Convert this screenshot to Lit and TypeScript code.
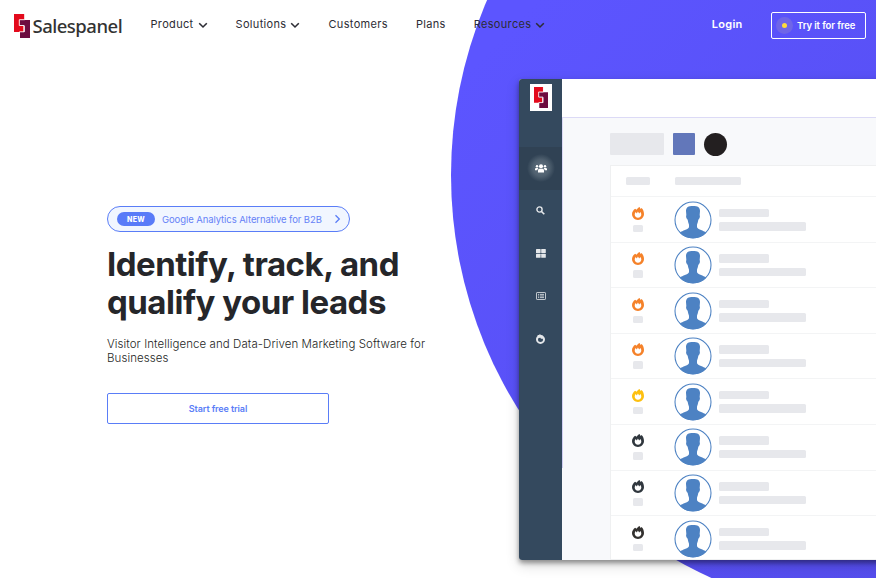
import { LitElement, html, css, svg } from "lit";
import { customElement } from "lit/decorators.js";
import { styleMap } from "lit/directives/style-map.js";

const chevron = html`<svg width="10" height="7" viewBox="0 0 10 7" fill="none"><path d="M1.2 1.3 5 5l3.8-3.7" stroke="#2c2c34" stroke-width="1.6"/></svg>`;

const mark = svg`
  <path d="M0 0H10.5V6H6V12H9.5V18H0Z" fill="#e30a1c"/>
  <path d="M5.8 6H16V24H6V18H10.5V12H5.8Z" fill="#6d0b40"/>
  <path d="M10.8 0V5.7H5.3V11.5H10.2V17.8H5.5V18.6" fill="none" stroke="#fff" stroke-width=".9"/>`;

const flame = html`<svg class="flame" width="12" height="13" viewBox="0 0 12 13">
  <path fill="currentColor" fill-rule="evenodd" d="M3.1 1.7 4.6 2.8C5.2 1.6 6.2.6 7.6 0c.2.9.6 1.4 1.1 1.9l.9-.8C11.3 2.8 12 5 12 7.1 12 10.5 9.300 13 6 13S0 10.500 0 7.100C0 5 1.300 3 3.100 1.700ZM3.700 5.100C3 5.900 2.700 6.600 2.700 7.500c0 1.900 1.400 3.200 3.300 3.200s3.300-1.300 3.300-3.200c0-.9-.3-1.700-.9-2.400L7.200 6.600 5.900 4.600 4.800 6.400Z"/></svg>`;

const avatar = html`<svg class="avatar" width="38" height="38" viewBox="0 0 114 114">
  <circle cx="57" cy="57" r="54" fill="#fff" stroke="#4d82c3" stroke-width="3.2"/>
  <path fill="#4d82c3" d="M36 30C36 19 43 15 57 15S78 19 78 30L77 42C79 47 77 53 73 56 72 63 70 67 69 71V79C74 87 87 88 97 95 87 106 73 112 57 112S27 106 17 95C27 88 40 87 45 79V71C44 67 42 63 41 56 37 53 35 47 37 42Z"/></svg>`;

@customElement("app-header")
class AppHeader extends LitElement {
  static styles = css`
    :host { display: flex; height: 50px; position: relative; color: #2c2c34; font: 400 11px Inter, sans-serif; letter-spacing: .33px; }
    .brand { display: flex; width: 136.5px; padding: 14px 0 0 14px; }
    .mark { flex: none; }
    .name { font: 500 18.5px/24px "Noto Sans", sans-serif; letter-spacing: -.5px; margin: 0 0 0 2.5px; color: #333; }
    nav { display: flex; height: 48px; align-items: center; gap: 28px; }
    .item { display: flex; align-items: center; gap: 4px; white-space: nowrap; }
    .item svg { margin-top: 2px; }
    .actions { display: flex; margin-left: auto; padding: 12px 10px 0 0; align-items: flex-start; color: #fff; }
    .login { font-weight: 600; line-height: 25px; margin-right: 28.5px; letter-spacing: .25px; }
    .try { display: flex; align-items: center; box-sizing: border-box; width: 95px; height: 27px; border: 1px solid #fff; border-radius: 2px; padding-left: 4px; gap: 4px; font: 600 9.5px Inter, sans-serif; letter-spacing: -.1px; white-space: nowrap; }
    .halo { display: grid; place-items: center; width: 17px; height: 17px; border-radius: 50%; background: #6f65e8; }
    .halo::after { content: ""; width: 5px; height: 5px; border-radius: 50%; background: #ffda3b; }
  `;
  render() {
    return html`
      <div class="brand"><svg class="mark" width="16" height="24" viewBox="0 0 16 24">${mark}</svg><span class="name">Salespanel</span></div>
      <nav>
        ${[["Product", true], ["Solutions", true], ["Customers", false], ["Plans", false], ["Resources", true]].map(
          ([label, menu]) => html`<span class="item">${label}${menu ? chevron : ""}</span>`)}
      </nav>
      <div class="actions"><span class="login">Login</span><span class="try"><i class="halo"></i>Try it for free</span></div>`;
  }
}

@customElement("app-hero")
class AppHero extends LitElement {
  static styles = css`
    :host { display: block; width: 340px; padding: 156px 0 0 107px; font-family: Inter, sans-serif; color: #25262a; }
    .pill { display: flex; align-items: center; box-sizing: border-box; width: 243px; height: 26px; border: 1px solid #5a7df7; border-radius: 13px; background: #f1f6ff; padding: 0 8px 0 9px; color: #6682f7; font-size: 9.5px; letter-spacing: -.09px; white-space: nowrap; }
    .tag { width: 38px; height: 14px; border-radius: 7px; background: #597bf8; color: #fff; font: 800 7px/15px Inter, sans-serif; text-align: center; letter-spacing: .4px; margin-right: 7px; }
    .pill svg { margin-left: auto; }
    h1 { margin: 13px 0 0; font-size: 33px; line-height: 38px; font-weight: 700; letter-spacing: -.5px; white-space: nowrap; }
    p { margin: 16px 0 0; font-size: 11.5px; line-height: 14px; font-weight: 300; letter-spacing: .07px; white-space: nowrap; color: #1e1f25; }
    .cta { box-sizing: border-box; width: 222px; height: 31px; margin-top: 28px; border: 1px solid #5a7df7; border-radius: 2px; color: #5a7df7; text-align: center; font: 600 9px/29px Inter, sans-serif; letter-spacing: -.1px; }
  `;
  render() {
    return html`
      <div class="pill"><span class="tag">NEW</span><span>Google Analytics Alternative for B2B</span>
        <svg width="7" height="10" viewBox="0 0 7 10" fill="none"><path d="m1.5 1.3 3.8 3.7-3.8 3.7" stroke="#5a7df7" stroke-width="1.3"/></svg></div>
      <h1>Identify, track, and<br>qualify your leads</h1>
      <p>Visitor Intelligence and Data-Driven Marketing Software for<br>Businesses</p>
      <div class="cta">Start free trial</div>`;
  }
}

@customElement("app-dashboard")
class AppDashboard extends LitElement {
  static styles = css`
    :host { display: flex; width: 380px; height: 481px; border-radius: 3px; overflow: hidden; background: #f8f9fb; }
    .side { width: 43px; background: #34495e; flex: none; display: flex; flex-direction: column; }
    .logo { box-sizing: border-box; width: 22px; height: 27px; margin: 4.5px 0 36.5px 11px; background: #fff; padding: 3px 4px; }
    .logo svg { display: block; }
    .slot { height: 42.6px; display: grid; place-items: center; color: #e4e7ea; }
    .slot.on { background: #304254; }
    .glow { display: grid; place-items: center; width: 28px; height: 28px; border-radius: 50%; background: radial-gradient(closest-side, #657482 0, #4f606f 60%, #304254 100%); color: #fff; }
    .main { flex: 1; min-width: 0; display: flex; flex-direction: column; }
    .top { flex: none; height: 38px; background: #fff; border-bottom: 1px solid #dcdaf6; }
    .body { flex: 1; padding: 14.5px 0 0 48px; background: linear-gradient(#dcdaf6, #cfcdf2) 0 0 / 1px 350px no-repeat; }
    .tools { display: flex; align-items: center; gap: 9px; height: 23px; }
    .field { width: 53.5px; height: 22.5px; background: #e7e8ec; border-radius: 1px; }
    .square { width: 22.5px; height: 22.5px; background: #6277ba; border-radius: 1px; }
    .dot { width: 23px; height: 23px; background: #231f20; border-radius: 50%; }
    .table { margin-top: 9.5px; border: 1px solid #eff0f1; background: #fff; height: 393px; overflow: hidden; }
    .head { display: flex; height: 31px; box-sizing: border-box; padding: 11px 0 0 15px; gap: 25px; border-bottom: 1px solid #f3f4f5; }
    .bar { background: #e7e8ec; border-radius: 1.5px; }
    .row { display: flex; height: 45.6px; box-sizing: border-box; border-bottom: 1px solid #f3f4f5; }
    .score { width: 54px; padding-top: 9.5px; flex: none; display: flex; flex-direction: column; align-items: center; gap: 5px; }
    .flame, .avatar { display: block; flex: none; }
    .avatar { margin: 3.5px 7px 0 9px; }
    .lines { padding-top: 11.5px; display: grid; gap: 5px; align-content: start; }
  `;
  bar(w: number, h: number) {
    return html`<div class="bar" style=${styleMap({ width: `${w}px`, height: `${h}px` })}></div>`;
  }
  render() {
    const glyphs = [
      html`<svg width="9" height="9" viewBox="0 0 9 9"><circle cx="3.5" cy="3.5" r="2.6" fill="none" stroke="currentColor" stroke-width="1.4"/><path d="m5.5 5.5 2.8 2.8" stroke="currentColor" stroke-width="1.6"/></svg>`,
      html`<svg width="10" height="9" viewBox="0 0 10 9" fill="currentColor"><rect width="4.6" height="4.1" rx=".6"/><rect x="5.2" width="4.6" height="4.1" rx=".6"/><rect y="4.7" width="4.6" height="4.1" rx=".6"/><rect x="5.2" y="4.7" width="4.6" height="4.1" rx=".6"/></svg>`,
      html`<svg width="10" height="8" viewBox="0 0 10 8" fill="none" stroke="currentColor"><rect x=".5" y=".5" width="9" height="7" rx=".6" stroke-width=".8"/><path d="M2 2.4h1m.8 0H8M2 4h1m.8 0H8M2 5.6h1m.8 0H8" stroke-width=".8"/></svg>`,
      html`<svg width="9" height="10" viewBox="0 0 12 13"><path fill="currentColor" fill-rule="evenodd" d="M2 2.6 2.2 1.3 3.800 1.300 5.200 0 6.800 1.300 8.600 1.600 10 2.900C11.300 4 12 5.500 12 7.200 12 10.500 9.300 13 6 13S0 10.500 0 7.200C0 5.500.8 3.600 2 2.600ZM3.500 5.300C2.900 6 2.700 6.700 2.700 7.500c0 1.900 1.400 3 3.300 3s3.300-1.100 3.300-3c0-.5-.1-.9-.3-1.300L6.500 6.200 6 4.700Z"/></svg>`,
    ];
    const heat = ["#f5822a", "#f5822a", "#f5822a", "#f5822a", "#fdc010", "#30373e", "#30373e", "#33312f"];
    return html`
      <div class="side">
        <div class="logo"><svg width="14" height="21" viewBox="0 0 16 24">${mark}</svg></div>
        <div class="slot on"><div class="glow"><svg width="12" height="9" viewBox="0 0 12 9" fill="currentColor"><circle cx="6" cy="2.3" r="2"/><circle cx="2" cy="2.2" r="1.2"/><circle cx="10" cy="2.2" r="1.2"/><path d="M3 8.500V6.500Q3 4.800 4.500 4.800h3Q9 4.800 9 6.500v2ZM0 6.300V5Q0 3.900 1.200 3.900H3Q3.400 4.200 3 4.700 2.300 5.500 2.200 6.300ZM12 6.300V5q0-1.100-1.200-1.100H9q-.4.300 0 .8.700.8.800 1.600Z"/></svg></div></div>
        ${glyphs.map((g) => html`<div class="slot">${g}</div>`)}
      </div>
      <div class="main">
        <div class="top"></div>
        <div class="body">
          <div class="tools"><div class="field"></div><div class="square"></div><div class="dot"></div></div>
          <div class="table">
            <div class="head">${this.bar(24, 7.5)}${this.bar(66, 7.5)}</div>
            ${heat.map((color) => html`<div class="row">
              <div class="score" style=${styleMap({ color })}>${flame}${this.bar(9.5, 7.5)}</div>
              ${avatar}
              <div class="lines">${this.bar(50, 8.5)}${this.bar(87, 8.5)}</div>
            </div>`)}
          </div>
        </div>
      </div>`;
  }
}

@customElement("app-root")
class AppRoot extends LitElement {
  static styles = css`
    :host { display: block; position: relative; width: 876px; height: 578px; overflow: hidden; background: #fff; }
    .disc { position: absolute; left: 451px; top: -267px; width: 884px; height: 884px; border-radius: 50%; background: linear-gradient(135deg, #5c55ff 20%, #5850f5 50%, #544ce8 85%); }
    .shot { position: absolute; left: 519px; top: 79px; border-radius: 3px; box-shadow: 0 3px 5px rgba(0, 0, 0, .38), 0 5px 14px rgba(0, 0, 0, .16); }
  `;
  render() {
    return html`<div class="disc"></div><app-header></app-header><app-hero></app-hero><app-dashboard class="shot"></app-dashboard>`;
  }
}
